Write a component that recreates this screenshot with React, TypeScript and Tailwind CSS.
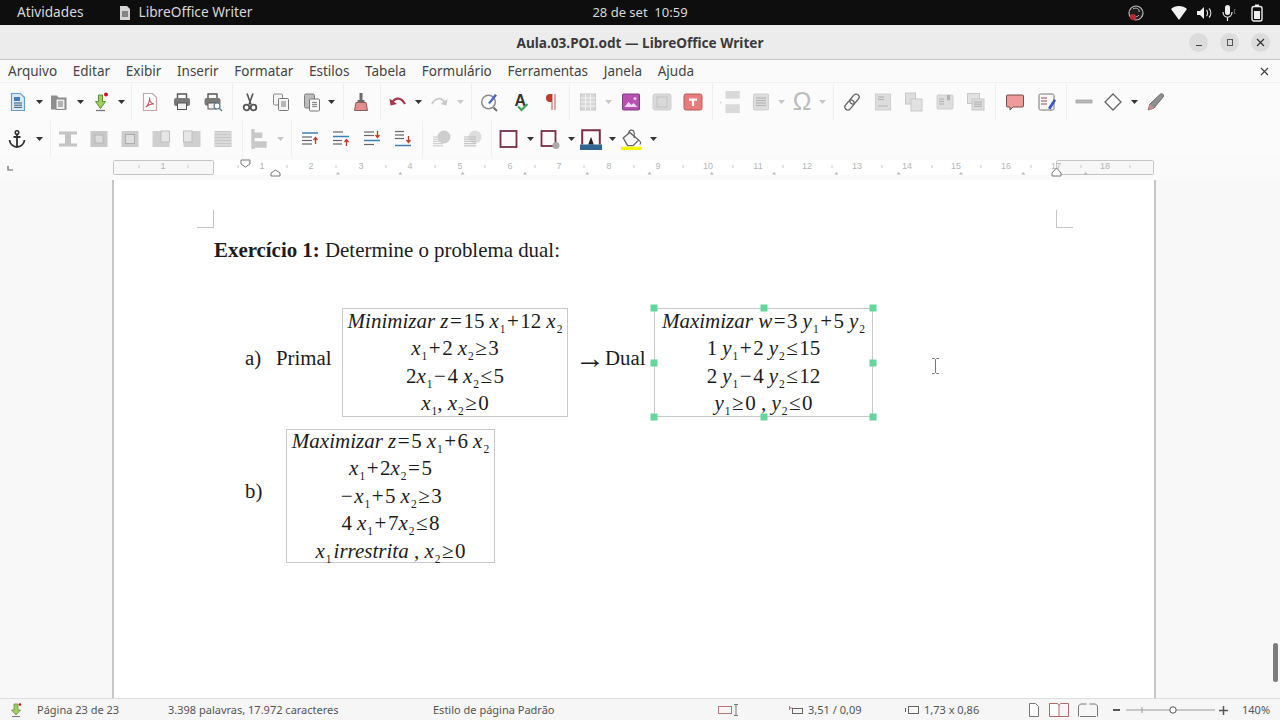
import type { ReactNode } from 'react';

const GRAY = '#c9c9c9';
const DARK = '#555555';
const RED = '#a8364c';

function Svg({ children, size = 20 }: { children: ReactNode; size?: number }) {
  return (
    <svg width={size} height={size} viewBox="0 0 20 20" fill="none" className="block shrink-0">
      {children}
    </svg>
  );
}

function Lines({ x, y, w, n, gap = 3, color = DARK }: { x: number; y: number; w: number; n: number; gap?: number; color?: string }) {
  return (
    <>
      {Array.from({ length: n }).map((_, i) => (
        <path key={i} d={`M${x} ${y + i * gap}h${w}`} stroke={color} strokeWidth="1.2" />
      ))}
    </>
  );
}

const icons: Record<string, ReactNode> = {
  newDoc: (
    <Svg>
      <path d="M3.5 1.5h9l4 4v13h-13z" fill="#dbe9f5" stroke="#5f9fcf" strokeWidth="1.2" />
      <rect x="6" y="5" width="6" height="4" fill="#3f7fb5" />
      <Lines x={6} y={11} w={8} n={3} gap={2.2} color="#4c6f8c" />
    </Svg>
  ),
  open: (
    <Svg>
      <path d="M2 3.5h6l1.5 2h8v12h-15.500z" fill="#8f8f8f" />
      <rect x="7" y="7" width="9" height="10.500" fill="#eeeeee" stroke="#8a8a8a" />
      <Lines x={9} y={10} w={5} n={3} gap={2} color="#8a8a8a" />
    </Svg>
  ),
  save: (
    <Svg>
      <path d="M7.500 3h4v6.500h3l-5 7-5-7h3z" fill="#a3cf62" stroke="#5c8f2e" />
      <path d="M5 18.500h9" stroke="#777777" strokeWidth="1.300" />
      <circle cx="15" cy="2.500" r="2" fill="#c8102e" />
    </Svg>
  ),
  pdf: (
    <Svg>
      <path d="M3.500 1.500h9l4 4v13h-13z" fill="#ffffff" stroke="#c7a6a6" strokeWidth="1.200" />
      <path d="M6 15c2-1 4-7 3.500-9.500-.3 3 1.500 6 4.500 6.500-3-.3-6 1-8 3z" stroke="#d0505a" strokeWidth="1.100" />
    </Svg>
  ),
  print: (
    <Svg>
      <path d="M5.500 6V2h9v4" stroke={DARK} strokeWidth="1.400" />
      <rect x="2" y="6" width="16" height="8" rx="2" fill="#7a7a7a" />
      <rect x="5.500" y="11" width="9" height="6.500" fill="#f2f2f2" stroke={DARK} />
    </Svg>
  ),
  preview: (
    <Svg>
      <path d="M5 6V2h9v4" stroke={DARK} strokeWidth="1.400" />
      <rect x="1.500" y="6" width="16" height="7.500" rx="2" fill="#7a7a7a" />
      <rect x="5" y="11" width="8" height="6" fill="#f2f2f2" stroke={DARK} />
      <circle cx="14" cy="14" r="3" fill="#ffffff" stroke="#5c7c8c" strokeWidth="1.200" />
      <path d="M16 16l3 3" stroke="#5c7c8c" strokeWidth="1.400" />
    </Svg>
  ),
  cut: (
    <Svg>
      <path d="M7 1.500l4 11M13 1.500l-4 11" stroke={DARK} strokeWidth="1.600" />
      <circle cx="6.500" cy="15.500" r="2.800" stroke={DARK} strokeWidth="1.800" />
      <circle cx="13.500" cy="15.500" r="2.800" stroke={DARK} strokeWidth="1.800" />
    </Svg>
  ),
  copy: (
    <Svg>
      <rect x="2.500" y="2" width="9" height="11" rx="1" fill="#f5f5f5" stroke="#8c8c8c" />
      <rect x="7.500" y="6.500" width="10" height="12" rx="1" fill="#f5f5f5" stroke="#777777" />
      <Lines x={10} y={10} w={5} n={3} gap={2} color="#8c8c8c" />
    </Svg>
  ),
  paste: (
    <Svg>
      <rect x="2.500" y="2" width="10" height="14" rx="1.500" fill="#bdbdbd" stroke="#7b7b7b" />
      <rect x="7.500" y="7" width="10" height="12" rx="1" fill="#f7f7f7" stroke="#777777" />
      <Lines x={10} y={10.500} w={5} n={3} gap={2} color="#8c8c8c" />
    </Svg>
  ),
  clone: (
    <Svg>
      <rect x="8.500" y="1" width="3" height="7" fill="#6b6b6b" />
      <path d="M6.500 8h7v2.500h-7z" fill="#6b6b6b" />
      <path d="M5 10.500h10l1.500 8h-13z" fill="#e48d8d" stroke="#8c5a5a" />
    </Svg>
  ),
  undo: (
    <Svg>
      <path d="M4 11c3-6 9-6 13 1" stroke={RED} strokeWidth="2.200" />
      <path d="M1.500 6.500l1 7 6.500-1.500z" fill={RED} />
    </Svg>
  ),
  redo: (
    <Svg>
      <path d="M16 11c-3-6-9-6-13 1" stroke={GRAY} strokeWidth="1.800" />
      <path d="M18.500 7l-1 6.500-6-1.500z" fill={GRAY} />
    </Svg>
  ),
  find: (
    <Svg>
      <circle cx="8.500" cy="10" r="6.800" fill="#ffffff" stroke="#8c8c8c" strokeWidth="1.500" />
      <path d="M13.500 15.500l3.500 3.500" stroke="#6b6b6b" strokeWidth="1.800" />
      <path d="M8 11l7-9 2 1.500-7 8.500z" fill="#4468c4" />
    </Svg>
  ),
  spell: (
    <Svg>
      <text x="2.500" y="13.500" fontFamily="Liberation Sans" fontWeight="700" fontSize="16" fill="#333333">A</text>
      <path d="M6 14.500l3.500 3.500 6-6" stroke="#3ea652" strokeWidth="2.200" />
    </Svg>
  ),
  pilcrow: (
    <Svg>
      <path d="M11 2v16M14 2v16" stroke="#d68a8a" strokeWidth="1.500" />
      <path d="M11 2H9a4 4 0 0 0 0 8h2z" fill="#c0392b" />
    </Svg>
  ),
  table: (
    <Svg>
      <rect x="2.500" y="2" width="15" height="16" fill="#d8d8d8" stroke={GRAY} />
      <path d="M7.500 2v16M12.500 2v16M2.500 6h15M2.500 10h15M2.500 14h15" stroke="#f2f2f2" />
    </Svg>
  ),
  image: (
    <Svg>
      <rect x="1.500" y="2" width="17" height="16" rx="1" fill="#b84fb2" stroke="#83397f" />
      <path d="M3.500 15l4-5 3 3 2-2 4 4z" fill="#f3d7f2" />
      <circle cx="14" cy="6.500" r="1.500" fill="#f3d7f2" />
    </Svg>
  ),
  chart: (
    <Svg>
      <rect x="1" y="2" width="18" height="16" rx="2" fill="#d9d9d9" stroke="#cfcfcf" />
      <rect x="5" y="5" width="10" height="10" stroke="#c2c2c2" />
    </Svg>
  ),
  textbox: (
    <Svg>
      <rect x="1" y="2" width="18" height="16" rx="2" fill="#e67c7c" stroke="#b85a5a" />
      <path d="M6 6.500h8v2.200h-2.900V14H8.900V8.700H6z" fill="#ffffff" />
    </Svg>
  ),
  pageBreak: (
    <Svg size={22}>
      <rect x="5" y="0" width="13" height="7" fill="#d9d9d9" />
      <rect x="5" y="12" width="13" height="8" fill="#d9d9d9" />
      <path d="M0 9.500l2 1-2 1z" fill="#d9d9d9" />
    </Svg>
  ),
  field: (
    <Svg>
      <rect x="2.500" y="2" width="15" height="16" rx="1" fill="#dddddd" stroke="#cfcfcf" />
      <Lines x={5} y={6} w={10} n={4} gap={2.500} color="#b5b5b5" />
    </Svg>
  ),
  omega: (
    <div className="flex h-[22px] w-[22px] items-center justify-center overflow-visible font-['Liberation_Sans',sans-serif] text-[25px] leading-none text-[#bdbdbd]">Ω</div>
  ),
  link: (
    <Svg>
      <rect x="9.500" y="1.500" width="6" height="11" rx="3" transform="rotate(40 12.500 7)" stroke="#666666" strokeWidth="1.300" />
      <rect x="4.500" y="7.500" width="6" height="11" rx="3" transform="rotate(40 7.500 13)" stroke="#666666" strokeWidth="1.300" />
    </Svg>
  ),
  footnote: (
    <Svg>
      <rect x="2.500" y="2" width="15" height="16" fill="#dddddd" stroke="#cfcfcf" />
      <Lines x={5} y={5} w={6} n={2} gap={2.500} color="#b5b5b5" />
      <path d="M5 14h10" stroke="#b5b5b5" />
    </Svg>
  ),
  endnote: (
    <Svg>
      <rect x="1.500" y="1" width="10" height="11" fill="#dddddd" stroke="#c8c8c8" />
      <rect x="7" y="7" width="11" height="12" fill="#e2e2e2" stroke="#c8c8c8" />
    </Svg>
  ),
  bookmark: (
    <Svg>
      <rect x="2" y="3" width="16" height="14" rx="1" fill="#dddddd" stroke="#cfcfcf" />
      <path d="M12 3h3v6l-1.500-1.500L12 9z" fill="#b0b0b0" />
      <Lines x={4} y={7} w={5} n={3} gap={2.500} color="#b5b5b5" />
    </Svg>
  ),
  xref: (
    <Svg>
      <rect x="1.500" y="1.500" width="12" height="10" fill="#e2e2e2" stroke="#c8c8c8" />
      <rect x="6" y="7" width="12" height="11" fill="#dddddd" stroke="#c8c8c8" />
      <Lines x={8} y={10} w={8} n={3} gap={2.200} color="#b5b5b5" />
    </Svg>
  ),
  comment: (
    <Svg>
      <path d="M2.500 3h15a1 1 0 0 1 1 1v10a1 1 0 0 1-1 1H8l-3 3v-3H2.500a1 1 0 0 1-1-1V4a1 1 0 0 1 1-1z" fill="#ee9b9b" stroke="#7d4a4a" />
    </Svg>
  ),
  track: (
    <Svg>
      <rect x="2" y="2" width="15" height="16" rx="1.500" fill="#f7f7f7" stroke="#777777" />
      <Lines x={4} y={6} w={6} n={3} gap={3} color="#9a6a6a" />
      <path d="M11 16l6-9 2 1.500-5.500 9z" fill="#3b55c0" />
    </Svg>
  ),
  line: (
    <Svg>
      <rect x="2" y="8" width="16" height="3" fill="#bbbbbb" stroke="#8d8d8d" strokeWidth=".6" />
    </Svg>
  ),
  diamond: (
    <Svg>
      <path d="M10 2l8 8-8 8-8-8z" fill="#ffffff" stroke="#666666" strokeWidth="1.300" />
    </Svg>
  ),
  pen: (
    <Svg>
      <path d="M2 18l2-6L14.500 2c1.500-1 3.500.5 3 2.500L8 16z" fill="#8f8f8f" stroke="#6b6b6b" />
      <path d="M2 18l2-6 4 4z" fill="#cf8c8c" />
    </Svg>
  ),
  anchor: (
    <Svg>
      <circle cx="10" cy="3.500" r="1.800" stroke="#2f2f2f" strokeWidth="1.500" />
      <path d="M10 5.500V18M6.500 8h7" stroke="#2f2f2f" strokeWidth="1.800" />
      <path d="M2.500 11c.5 4.500 4 7 7.500 7s7-2.500 7.500-7" stroke="#2f2f2f" strokeWidth="1.800" />
    </Svg>
  ),
  wrapNone: (
    <Svg>
      <path d="M1 2.500h18v3h-18zM1 14.500h18v3h-18zM7 5.500h6v9H7z" fill="#c4c4c4" />
    </Svg>
  ),
  wrapPage: (
    <Svg>
      <rect x="1.500" y="2" width="17" height="16" fill="#c8c8c8" />
      <rect x="6" y="6" width="8" height="8" fill="#dcdcdc" stroke="#b5b5b5" />
    </Svg>
  ),
  wrapThrough: (
    <Svg>
      <rect x="1.500" y="2" width="17" height="16" fill="#cccccc" />
      <rect x="5.500" y="5.500" width="9" height="9" fill="#dedede" stroke="#adadad" />
    </Svg>
  ),
  wrapLeft: (
    <Svg>
      <rect x="1.500" y="2" width="17" height="16" fill="#cfcfcf" />
      <rect x="10" y="2" width="8.500" height="11" fill="#e6e6e6" stroke="#bdbdbd" />
    </Svg>
  ),
  wrapRight: (
    <Svg>
      <rect x="1.500" y="2" width="17" height="16" fill="#cfcfcf" />
      <rect x="1.500" y="2" width="8.500" height="11" fill="#e6e6e6" stroke="#bdbdbd" />
    </Svg>
  ),
  wrapFull: (
    <Svg>
      <rect x="1.500" y="2" width="17" height="16" fill="#c8c8c8" />
      <Lines x={1.500} y={4} w={17} n={5} gap={3} color="#e4e4e4" />
    </Svg>
  ),
  alignObj: (
    <Svg size={22}>
      <path d="M3 1h3v18H3zM6 4h7v5H6zM6 12h11v6H6z" fill="#c8c8c8" />
    </Svg>
  ),
  paraUp1: (
    <Svg>
      <path d="M2 4h16" stroke="#3f7fb5" strokeWidth="1.500" />
      <Lines x={2} y={8} w={10} n={3} gap={3.500} color="#666666" />
      <path d="M15.500 15v-6M13.500 11l2-2.500 2 2.500" stroke="#c0392b" strokeWidth="1.300" />
    </Svg>
  ),
  paraUp2: (
    <Svg>
      <Lines x={2} y={3} w={10} n={1} color="#666666" />
      <path d="M2 7.500h16" stroke="#3f7fb5" strokeWidth="1.500" />
      <Lines x={2} y={11.500} w={9} n={2} gap={3.500} color="#666666" />
      <path d="M15.500 17v-6M13.500 13l2-2.500 2 2.500" stroke="#c0392b" strokeWidth="1.300" />
    </Svg>
  ),
  paraDown1: (
    <Svg>
      <Lines x={2} y={3} w={10} n={2} gap={3.500} color="#666666" />
      <path d="M2 11.500h16" stroke="#3f7fb5" strokeWidth="1.500" />
      <Lines x={2} y={15.500} w={10} n={1} color="#666666" />
      <path d="M15.500 2v6M13.500 6l2 2.500 2-2.500" stroke="#c0392b" strokeWidth="1.300" />
    </Svg>
  ),
  paraDown2: (
    <Svg>
      <Lines x={2} y={2.500} w={9} n={3} gap={3.500} color="#666666" />
      <path d="M2 16.500h16" stroke="#3f7fb5" strokeWidth="1.500" />
      <path d="M15.500 7v6M13.500 11l2 2.500 2-2.500" stroke="#c0392b" strokeWidth="1.300" />
    </Svg>
  ),
  front: (
    <Svg>
      <Lines x={1} y={8} w={10} n={5} gap={2.200} color="#cfcfcf" />
      <circle cx="12" cy="8" r="6.500" fill="#cdcdcd" />
    </Svg>
  ),
  back: (
    <Svg>
      <circle cx="12" cy="8" r="6.500" fill="#dddddd" />
      <Lines x={1} y={8} w={12} n={5} gap={2.200} color="#c4c4c4" />
    </Svg>
  ),
  borderBox: (
    <Svg>
      <rect x="1.500" y="2" width="16" height="16" stroke="#7a2d44" strokeWidth="1.800" />
    </Svg>
  ),
  borderStyle: (
    <Svg>
      <rect x="1.500" y="2" width="14" height="15" stroke="#7a2d44" strokeWidth="1.800" />
      <circle cx="16" cy="16.500" r="3.500" fill="#a9a9a9" />
    </Svg>
  ),
  borderColor: (
    <Svg size={22}>
      <path d="M2 15V2h16v13" stroke="#7a2d44" strokeWidth="1.800" />
      <rect x="0" y="15" width="20" height="5" fill="#2f6690" />
      <path d="M10 8l2.500 7h-5z" fill="#222222" />
    </Svg>
  ),
  fill: (
    <Svg size={22}>
      <path d="M2 9l6-5 8 7-5 5H6z" fill="#f7f7f7" stroke="#666666" strokeWidth="1.200" />
      <path d="M7 5c0-4 5-4 5 0v4" stroke="#666666" strokeWidth="1.100" />
      <path d="M16 11c2 1.500 2.500 3 1 4" stroke="#666666" />
      <rect x="0" y="17" width="19" height="3" fill="#f5f50a" />
    </Svg>
  ),
};

type Item = [number, string];

// x is the centre of each control; 'a' dropdown arrow, 'g' greyed arrow, '|' separator
const row1: Item[] = [
  [18, 'newDoc'], [39, 'a'], [59, 'open'], [80, 'a'], [101, 'save'], [121, 'a'], [131, '|'],
  [150, 'pdf'], [182, 'print'], [213, 'preview'], [232, '|'], [250, 'cut'], [281, 'copy'],
  [312, 'paste'], [331, 'a'], [343, '|'], [361, 'clone'], [380, '|'], [398, 'undo'], [418, 'a'],
  [439, 'redo'], [460, 'g'], [471, '|'], [490, 'find'], [522, 'spell'], [551, 'pilcrow'], [569, '|'],
  [588, 'table'], [608, 'g'], [631, 'image'], [662, 'chart'], [693, 'textbox'], [712, '|'],
  [731, 'pageBreak'], [761, 'field'], [781, 'g'], [802, 'omega'], [822, 'g'], [833, '|'],
  [852, 'link'], [883, 'footnote'], [914, 'endnote'], [945, 'bookmark'], [976, 'xref'], [995, '|'],
  [1015, 'comment'], [1047, 'track'], [1066, '|'], [1084, 'line'], [1113, 'diamond'], [1134, 'a'], [1156, 'pen'],
];

const row2: Item[] = [
  [17, 'anchor'], [39, 'a'], [50, '|'], [68, 'wrapNone'], [99, 'wrapPage'], [130, 'wrapThrough'],
  [161, 'wrapLeft'], [192, 'wrapRight'], [223, 'wrapFull'], [242, '|'], [259, 'alignObj'], [280, 'g'], [291, '|'],
  [310, 'paraUp1'], [341, 'paraUp2'], [372, 'paraDown1'], [403, 'paraDown2'], [422, '|'],
  [442, 'front'], [473, 'back'], [491, '|'], [509, 'borderBox'], [530, 'a'], [550, 'borderStyle'], [571, 'a'],
  [591, 'borderColor'], [612, 'a'], [632, 'fill'], [653, 'a'],
];

function Arrow({ color, style }: { color: string; style: { marginLeft: number } }) {
  return (
    <svg width="7" height="4" viewBox="0 0 7 4" style={style} className="shrink-0">
      <path d="M0 0h7L3.500 4z" fill={color} />
    </svg>
  );
}

function Toolbar({ items }: { items: Item[] }) {
  let cursor = 0;
  return (
    <div className="flex h-[37px] items-center bg-[#fbfbfb]">
      {items.map(([x, name]) => {
        const w = name === 'a' || name === 'g' ? 7 : name === '|' ? 1 : name === 'pageBreak' || name === 'omega' || name === 'alignObj' || name === 'borderColor' || name === 'fill' ? 22 : 20;
        const left = x - w / 2 - cursor;
        cursor = x + w / 2;
        const style = { marginLeft: left };
        if (name === 'a') return <Arrow key={x} style={style} color="#333333" />;
        if (name === 'g') return <Arrow key={x} style={style} color="#c8c8c8" />;
        if (name === '|') return <div key={x} style={style} className="h-[36px] w-px bg-[#efefef]" />;
        return <div key={x} style={style}>{icons[name]}</div>;
      })}
    </div>
  );
}

function TopBar() {
  return (
    <div className="relative flex h-[25px] items-center bg-[#0e0e0e] font-['Noto_Sans',sans-serif] text-[13.700px] text-[#d8d8d8]">
      <span className="ml-[17px]">Atividades</span>
      <svg width="12" height="14" viewBox="0 0 12 14" className="ml-[35px]">
        <path d="M1 0h7l3 3v11H1z" fill="#d4d4d4" />
        <path d="M3 6h6M3 8h6M3 10h6" stroke="#333333" />
      </svg>
      <span className="ml-[8px]">LibreOffice Writer</span>
      <span className="absolute left-1/2 -translate-x-1/2 text-[13px]">28 de set&nbsp; 10:59</span>
      <div className="ml-auto flex items-center">
        <svg width="18" height="18" viewBox="0 0 18 18">
          <circle cx="9" cy="9" r="7" fill="#1c1c1c" stroke="#bbbbbb" strokeWidth="1.200" />
          <path d="M6 5c3-2 7 0 6 3M12 11c-2 3-6 2-7 0" stroke="#bbbbbb" fill="none" />
          <circle cx="6" cy="13" r="3" fill="#c0272d" />
        </svg>
        <svg width="16" height="14" viewBox="0 0 16 14" className="ml-[26px]">
          <path d="M0 3c4-4 12-4 16 0l-8 11z" fill="#f2f2f2" />
        </svg>
        <svg width="16" height="14" viewBox="0 0 16 14" className="ml-[9px]">
          <path d="M1 5h3l4-4v12l-4-4H1z" fill="#eeeeee" />
          <path d="M10.500 4c1.500 1.500 1.500 4.500 0 6M13 2.500c2.500 2.500 2.500 6.500 0 9" stroke="#dddddd" strokeWidth="1.100" fill="none" />
        </svg>
        <svg width="16" height="18" viewBox="0 0 16 18" className="ml-[10px]">
          <rect x="3" y="1" width="5" height="10" rx="2.500" fill="#eeeeee" />
          <path d="M1 8c0 7 9 7 9 0M5.500 13v4" stroke="#eeeeee" strokeWidth="1.200" fill="none" />
          <path d="M13 5c-1 2-1 3 0 5" stroke="#888888" fill="none" />
        </svg>
        <svg width="12" height="18" viewBox="0 0 12 18" className="ml-[13px] mr-[17px]">
          <rect x="1" y="2.500" width="10" height="14.500" rx="2" fill="none" stroke="#eeeeee" strokeWidth="1.400" />
          <rect x="4" y="0.500" width="4" height="2" fill="#eeeeee" />
          <rect x="3" y="7" width="6" height="8" fill="#eeeeee" />
        </svg>
      </div>
    </div>
  );
}

function TitleBar() {
  return (
    <div className="relative flex h-[35px] items-center justify-center border-b border-[#c9c9c9] bg-[#ececec] pt-[3px] font-['Noto_Sans',sans-serif] text-[13.600px] font-bold text-[#3a3a3a]">
      <span>Aula.03.POI.odt — LibreOffice Writer</span>
      <div className="absolute right-[10px] top-[8px] flex gap-[12px] text-[#444444]">
        <div className="flex h-[19px] w-[19px] items-center justify-center rounded-full bg-[#dcdcdc]">
          <div className="mt-[5px] h-px w-[6px] bg-[#444444]" />
        </div>
        <div className="flex h-[19px] w-[19px] items-center justify-center rounded-full bg-[#dcdcdc]">
          <div className="h-[7px] w-[6px] border border-[#555555]" />
        </div>
        <div className="flex h-[19px] w-[19px] items-center justify-center rounded-full bg-[#dcdcdc]">
          <svg width="9" height="9" viewBox="0 0 9 9"><path d="M1 1l7 7M8 1l-7 7" stroke="#333333" strokeWidth="1.200" /></svg>
        </div>
      </div>
    </div>
  );
}

function MenuBar() {
  const menus = ['Arquivo', 'Editar', 'Exibir', 'Inserir', 'Formatar', 'Estilos', 'Tabela', 'Formulário', 'Ferramentas', 'Janela', 'Ajuda'];
  return (
    <div className="flex h-[23px] items-center gap-[15.700px] border-b border-[#f0f0f0] bg-[#fafafa] pl-[8px] pr-[11px] font-['Noto_Sans',sans-serif] text-[13.500px] text-[#444444]">
      {menus.map((m) => <span key={m}>{m}</span>)}
      <svg width="9" height="9" viewBox="0 0 9 9" className="ml-auto"><path d="M1 1l7 7M8 1l-7 7" stroke="#444444" strokeWidth="1.200" /></svg>
    </div>
  );
}

function Ruler() {
  const nums = [262, 311, 361, 410, 460, 510, 559, 609, 658, 708, 758, 807, 857, 907, 956, 1006, 1056, 1105];
  const stops = Array.from({ length: 13 }).map((_, i) => 338 + i * 62.3);
  return (
    <svg width="1280" height="23" className="block shrink-0 bg-[#fafafa]">
      <rect x="113" y="3" width="1041" height="15" fill="#ffffff" />
      <rect x="113.500" y="3.500" width="100" height="14" rx="1" fill="#f7f7f7" stroke="#c4c4c4" />
      <rect x="1056.500" y="3.500" width="97" height="14" rx="1" fill="#f7f7f7" stroke="#c4c4c4" />
      <path d="M8 9v4h5" stroke="#666666" strokeWidth="1.200" fill="none" />
      <text x="163" y="12" textAnchor="middle" fontSize="9" fill="#b5b5b5" fontFamily="Liberation Sans">1</text>
      {nums.map((x, i) => (
        <g key={x}>
          <text x={x} y="12" textAnchor="middle" fontSize="9" fill="#b5b5b5" fontFamily="Liberation Sans">{i + 1}</text>
          <path d={`M${x + 25} 8v3`} stroke="#c8c8c8" />
        </g>
      ))}
      <path d="M139 8v3M188 8v3M238 8v3" stroke="#c8c8c8" />
      {stops.map((x) => <path key={x} d={`M${x} 15l2 2.500h-4z`} fill="#b5b5b5" />)}
      <path d="M241 3h9v4l-4.500 3-4.500-3z" fill="#ffffff" stroke="#777777" />
      <path d="M271 19v-3l4.500-3 4.500 3v3z" fill="#ffffff" stroke="#777777" />
      <path d="M1052 19v-3l4.500-5 4.500 5v3z" fill="#ffffff" stroke="#777777" />
    </svg>
  );
}

function Sub({ children }: { children: ReactNode }) {
  return <sub className="-bottom-[5px] ml-px text-[11.500px] not-italic">{children}</sub>;
}

function V({ children }: { children: ReactNode }) {
  return <i className="ml-[5px]">{children}</i>;
}

function Op({ children }: { children: ReactNode }) {
  return <span className="mx-[1.500px]">{children}</span>;
}

function Formula({ lines, className }: { lines: ReactNode[]; className: string }) {
  return (
    <div className={`shrink-0 border border-[#c9c9c9] text-center text-[21px] leading-[27.400px] text-[#1c1c1c] ${className}`}>
      <div className="-mt-[2px]">
        {lines.map((l, i) => <div key={i} className="whitespace-nowrap">{l}</div>)}
      </div>
    </div>
  );
}

const handlePositions = [
  'left-0 top-0', 'left-1/2 top-0', 'left-full top-0',
  'left-0 top-1/2', 'left-full top-1/2',
  'left-0 top-full', 'left-1/2 top-full', 'left-full top-full',
];

function Page() {
  return (
    <div className="relative h-full w-[1044px] shrink-0 border-x-2 border-[#c6c6c6] bg-white font-['Liberation_Serif',serif] text-[20.800px] text-[#1c1c1c]">
      <div className="flex justify-between pl-[83px] pr-[81px] pt-[30px]">
        <div className="h-[18px] w-[17px] border-b border-r border-[#c4c4c4]" />
        <div className="h-[18px] w-[17px] border-b border-l border-[#c4c4c4]" />
      </div>

      <p className="ml-[100px] mt-[10px] text-[20.900px] leading-[24px]">
        <b>Exercício 1:</b> Determine o problema dual:
      </p>

      <div className="ml-[131px] mt-[46px] flex items-center">
        <span className="mb-[10px] w-[31px]">a)</span>
        <span className="mb-[10px] w-[66px]">Primal</span>
        <Formula
          className="h-[109px] w-[226px] pt-px"
          lines={[
            <><i>Minimizar z</i><Op>=</Op>15<V>x</V><Sub>1</Sub><Op>+</Op>12<V>x</V><Sub>2</Sub></>,
            <><i>x</i><Sub>1</Sub><Op>+</Op>2<V>x</V><Sub>2</Sub><Op>≥</Op>3</>,
            <>2<i>x</i><Sub>1</Sub><Op>−</Op>4<V>x</V><Sub>2</Sub><Op>≤</Op>5</>,
            <><i>x</i><Sub>1</Sub>, <i>x</i><Sub>2</Sub><Op>≥</Op>0</>,
          ]}
        />
        <div className="mb-[10px] flex w-[86px] items-center pl-[7px]">
          <span className="w-[30px] text-[30px] leading-none">→</span>
          <span>Dual</span>
        </div>
        <div className="relative">
          <Formula
            className="h-[109px] w-[219px] pt-px"
            lines={[
              <><i>Maximizar w</i><Op>=</Op>3<V>y</V><Sub>1</Sub><Op>+</Op>5<V>y</V><Sub>2</Sub></>,
              <>1<V>y</V><Sub>1</Sub><Op>+</Op>2<V>y</V><Sub>2</Sub><Op>≤</Op>15</>,
              <>2<V>y</V><Sub>1</Sub><Op>−</Op>4<V>y</V><Sub>2</Sub><Op>≤</Op>12</>,
              <><i>y</i><Sub>1</Sub><Op>≥</Op>0 , <i>y</i><Sub>2</Sub><Op>≤</Op>0</>,
            ]}
          />
          {handlePositions.map((p) => (
            <div key={p} className={`absolute h-[7px] w-[7px] -translate-x-1/2 -translate-y-1/2 bg-[#63d79b] ${p}`} />
          ))}
        </div>
      </div>

      <div className="ml-[131px] mt-[12px] flex items-center">
        <span className="mb-[10px] w-[41px]">b)</span>
        <Formula
          className="h-[134px] w-[209px]"
          lines={[
            <><i>Maximizar z</i><Op>=</Op>5<V>x</V><Sub>1</Sub><Op>+</Op>6<V>x</V><Sub>2</Sub></>,
            <><i>x</i><Sub>1</Sub><Op>+</Op>2<i>x</i><Sub>2</Sub><Op>=</Op>5</>,
            <><Op>−</Op><i>x</i><Sub>1</Sub><Op>+</Op>5<V>x</V><Sub>2</Sub><Op>≥</Op>3</>,
            <>4<V>x</V><Sub>1</Sub><Op>+</Op>7<i>x</i><Sub>2</Sub><Op>≤</Op>8</>,
            <><i>x</i><Sub>1</Sub><i className="ml-[2px]">irrestrita</i> , <i>x</i><Sub>2</Sub><Op>≥</Op>0</>,
          ]}
        />
      </div>

      {/* mouse text cursor */}
      <svg width="7" height="16" viewBox="0 0 7 16" className="absolute left-[818px] top-[178px]">
        <path d="M0 .5h2.500L3.500 1.500l1-1H7M3.500 1.500v13M0 15.500h2.500l1-1 1 1H7" stroke="#777777" fill="none" />
      </svg>
    </div>
  );
}

function StatusBar() {
  return (
    <div className="flex h-[22px] items-center border-t border-[#dedede] bg-[#f6f6f6] pt-px font-['Noto_Sans',sans-serif] text-[11px] text-[#555555]">
      <svg width="12" height="14" viewBox="0 0 12 14" className="ml-[10px]">
        <path d="M4 1h4v6h2.500L6 12 1.500 7H4z" fill="#a3cf62" stroke="#5e7f35" strokeWidth=".7" />
        <path d="M2 13.500h8" stroke="#777777" />
        <circle cx="10" cy="1.500" r="1.300" fill="#c8102e" />
      </svg>
      <span className="ml-[15px] w-[131px]">Página 23 de 23</span>
      <span className="w-[265px]">3.398 palavras, 17.972 caracteres</span>
      <span className="w-[285px]">Estilo de página Padrão</span>
      <svg width="22" height="12" viewBox="0 0 22 12">
        <rect x=".5" y="2.500" width="13" height="7" stroke="#b87777" fill="none" />
        <path d="M16 .5h4M18 .5v11M16 11.500h4" stroke="#777777" fill="none" />
      </svg>
      <svg width="14" height="11" viewBox="0 0 14 11" className="ml-[49px]">
        <path d="M.5 1v4M.5 3h3" stroke="#b87777" fill="none" />
        <rect x="3.500" y="3.500" width="10" height="5" stroke="#666666" fill="none" />
      </svg>
      <span className="ml-[5px] w-[82px]">3,51 / 0,09</span>
      <svg width="14" height="11" viewBox="0 0 14 11" className="ml-[15px]">
        <rect x="3.500" y="1.500" width="10" height="7" stroke="#666666" fill="none" />
        <path d="M.5 3v4" stroke="#666666" />
      </svg>
      <span className="ml-[5px] w-[84px]">1,73 x 0,86</span>
      <svg width="10" height="14" viewBox="0 0 10 14" className="ml-[21px]">
        <path d="M.5.5h6l3 3v10H.5z" fill="#ffffff" stroke="#777777" />
      </svg>
      <svg width="22" height="14" viewBox="0 0 20 14" className="ml-[9px]">
        <path d="M.5.5h8l1.500 2v11H.5zM19.500.5h-8L10 2.500" fill="#ffffff" stroke="#b06a6a" />
        <path d="M10 13.500h9.500V.5" fill="none" stroke="#b06a6a" />
      </svg>
      <svg width="20" height="14" viewBox="0 0 20 14" className="ml-[8px]">
        <path d="M.5 13.500V3l2-2h6M19.500 13.500V3l-2-2h-6M2 13.500h16" fill="none" stroke="#777777" />
      </svg>
      <div className="ml-[15px] h-[2px] w-[7px] bg-[#555555]" />
      <svg width="89" height="12" viewBox="0 0 89 12" className="ml-[6px]">
        <path d="M0 6h89" stroke="#999999" />
        <path d="M16 3v6" stroke="#999999" />
        <circle cx="47" cy="6" r="3.200" fill="#ffffff" stroke="#555555" />
      </svg>
      <svg width="9" height="9" viewBox="0 0 9 9" className="ml-[4px]"><path d="M4.500 0v9M0 4.500h9" stroke="#555555" strokeWidth="1.500" /></svg>
      <span className="ml-[14px]">140%</span>
    </div>
  );
}

export default function App() {
  return (
    <div className="flex h-screen w-full flex-col overflow-hidden bg-[#f8f8f8]">
      <TopBar />
      <TitleBar />
      <MenuBar />
      <Toolbar items={row1} />
      <Toolbar items={row2} />
      <Ruler />
      <div className="flex min-h-0 flex-1 pl-[112px]">
        <Page />
        <div className="flex flex-1 justify-end pr-[2px] pt-[463px]">
          <div className="h-[39px] w-[5px] rounded-full bg-[#7c7c7c]" />
        </div>
      </div>
      <StatusBar />
    </div>
  );
}
